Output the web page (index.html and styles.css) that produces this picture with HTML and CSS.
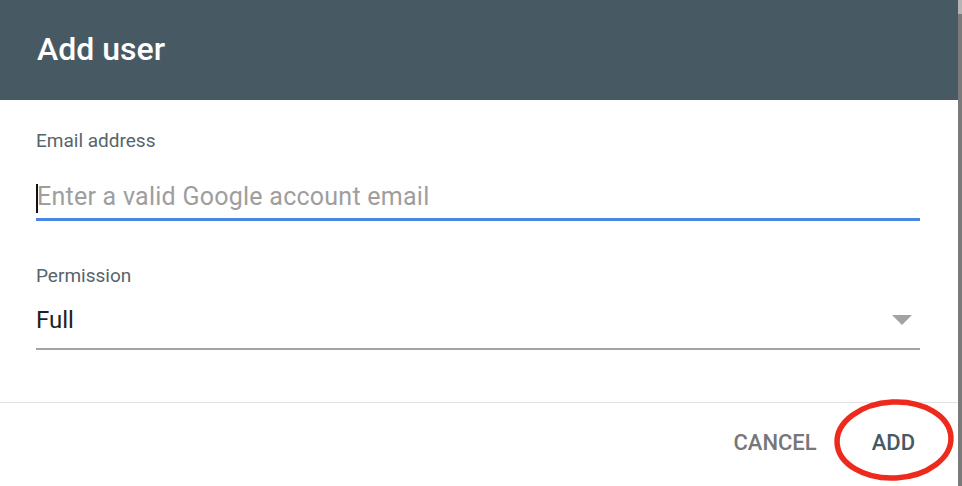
FILE: index.html
```html
<!DOCTYPE html>
<html lang="en">
<head>
<meta charset="utf-8">
<title>Add user</title>
<link rel="stylesheet" href="styles.css">
</head>
<body>
<div class="screen">
  <div class="dialog">
    <header class="dialog-header">
      <h1 class="dialog-title">Add user</h1>
    </header>
    <section class="dialog-body">
      <div class="field">
        <label class="field-label">Email address</label>
        <div class="input input-focused"><span class="caret"></span><span class="placeholder">Enter a valid Google account email</span></div>
      </div>
      <div class="field field-select">
        <label class="field-label">Permission</label>
        <div class="input select"><span class="value">Full</span><span class="arrow"></span></div>
      </div>
    </section>
    <footer class="dialog-footer">
      <button class="btn btn-cancel">CANCEL</button>
      <button class="btn btn-add">ADD</button>
      <svg class="circle-mark" width="126" height="86" viewBox="0 0 126 86">
        <ellipse cx="63" cy="43" rx="57" ry="38" fill="none" stroke="#ee2a1d" stroke-width="5.5" transform="rotate(-3 63 43)"/>
      </svg>
    </footer>
  </div>
  <div class="edge"></div>
</div>
</body>
</html>
```

FILE: styles.css
```css
html, body {
  margin: 0;
  padding: 0;
  background: #ffffff;
}
body {
  font-family: Roboto, "Liberation Sans", Arial, sans-serif;
  width: 962px;
  height: 486px;
  overflow: hidden;
}
.screen {
  display: flex;
  height: 486px;
}
.dialog {
  flex: 1;
  display: flex;
  flex-direction: column;
  background: #ffffff;
}
.edge {
  width: 4px;
  background: linear-gradient(#b4b4b4 0, #b4b4b4 14px, #7a7a7a 14px);
}
.dialog-header {
  height: 100px;
  box-sizing: border-box;
  background: #475a63;
  padding: 30px 0 0 37px;
}
.dialog-title {
  margin: 0;
  font-size: 32px;
  line-height: 38px;
  font-weight: 500;
  color: #ffffff;
}
.dialog-body {
  padding: 30px 38px 52px 36px;
  border-bottom: 1px solid #e2e2e2;
}
.field-select {
  margin-top: 44px;
}
.field-label {
  display: block;
  font-size: 19px;
  line-height: 22px;
  color: #56646b;
}
.input {
  display: flex;
  align-items: center;
  margin-top: 30px;
  height: 30px;
  padding-bottom: 6px;
  font-size: 24px;
  line-height: 30px;
  border-bottom: 3px solid #4a86e8;
}
.caret {
  width: 2px;
  height: 29px;
  background: #111111;
  margin-right: -1px;
  align-self: flex-start;
  margin-top: 2px;
}
.placeholder {
  color: #9e9e9e;
  font-size: 25px;
  letter-spacing: 0.25px;
}
.select {
  margin-top: 18px;
  padding-bottom: 13px;
  border-bottom: 2px solid #a3a3a3;
  justify-content: space-between;
}
.value {
  color: #222222;
}
.arrow {
  width: 0;
  height: 0;
  border-left: 10px solid transparent;
  border-right: 10px solid transparent;
  border-top: 10px solid #a3a3a3;
  margin-right: 8px;
}
.dialog-footer {
  position: relative;
  flex: 1;
  display: flex;
  justify-content: flex-end;
  align-items: flex-start;
  gap: 39px;
  padding: 27px 35px 0 0;
}
.btn {
  font-family: Roboto, "Liberation Sans", Arial, sans-serif;
  font-size: 22px;
  line-height: 26px;
  font-weight: 500;
  background: none;
  border: none;
  padding: 0 8px;
  margin: 0;
}
.btn-cancel {
  color: #777777;
}
.btn-add {
  color: #465a64;
}
.circle-mark {
  position: absolute;
  left: 831px;
  top: -6px;
  pointer-events: none;
}
```
